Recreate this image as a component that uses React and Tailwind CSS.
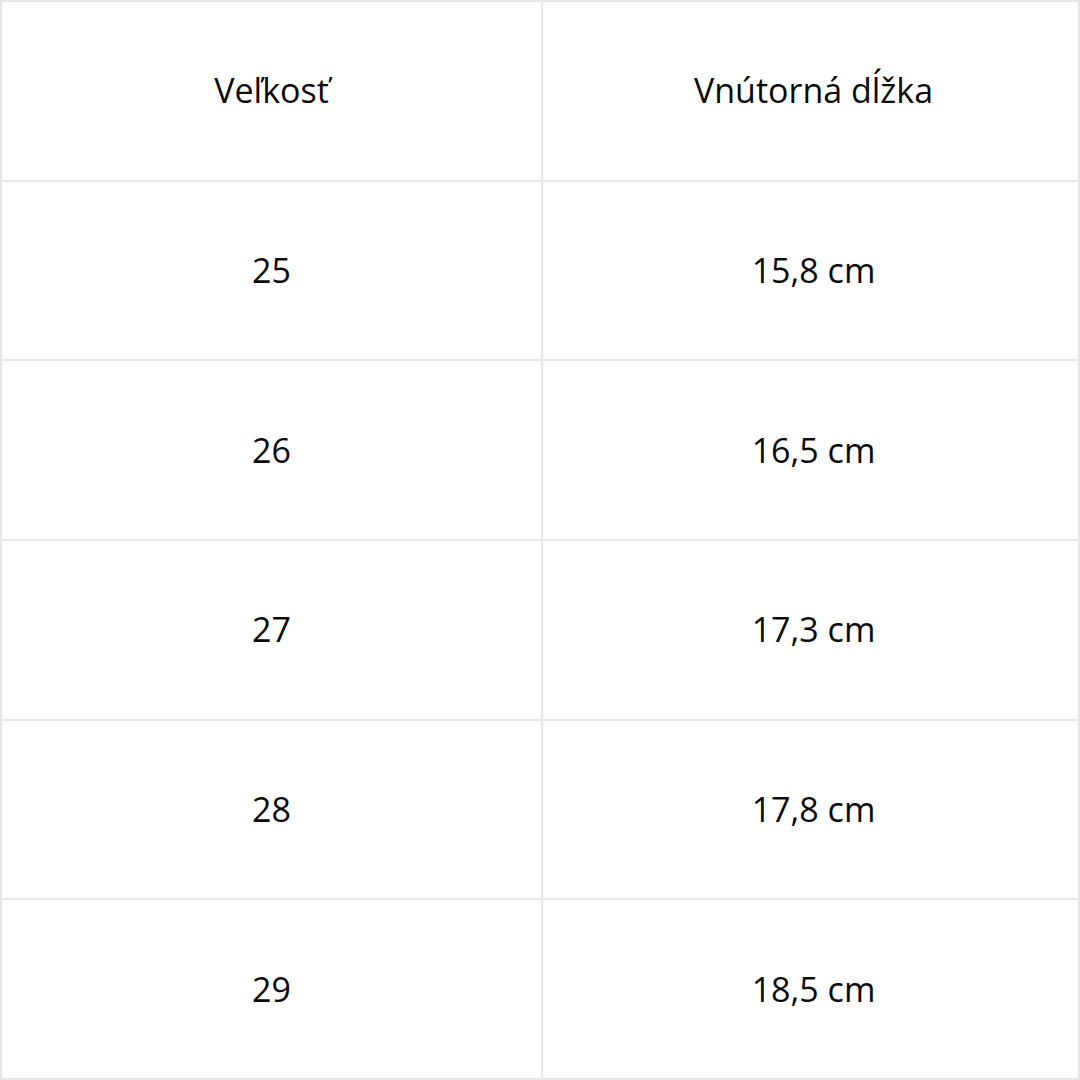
import React from 'react';

const ROWS = [
  ['Veľkosť', 'Vnútorná dĺžka'],
  ['25', '15,8 cm'],
  ['26', '16,5 cm'],
  ['27', '17,3 cm'],
  ['28', '17,8 cm'],
  ['29', '18,5 cm'],
];

export default function App() {
  return (
    <div
      className="w-[1080px] h-[1080px] bg-white text-[#0a0a0a] text-[34px] border-l-2 border-t-2 border-[#e6e6e6] grid grid-cols-[541px_537px] grid-rows-6"
      style={{ fontFamily: '"Open Sans", "Noto Sans", sans-serif' }}
    >
      {ROWS.map((row, i) =>
        row.map((cell, j) => (
          <div
            key={`${i}-${j}`}
            className={
              j === 0
                ? 'flex items-center justify-center border-r-2 border-b-2 border-[#e6e6e6]'
                : 'flex items-center justify-center pl-[6px] border-r-2 border-b-2 border-[#e6e6e6]'
            }
          >
            {cell}
          </div>
        ))
      )}
    </div>
  );
}
